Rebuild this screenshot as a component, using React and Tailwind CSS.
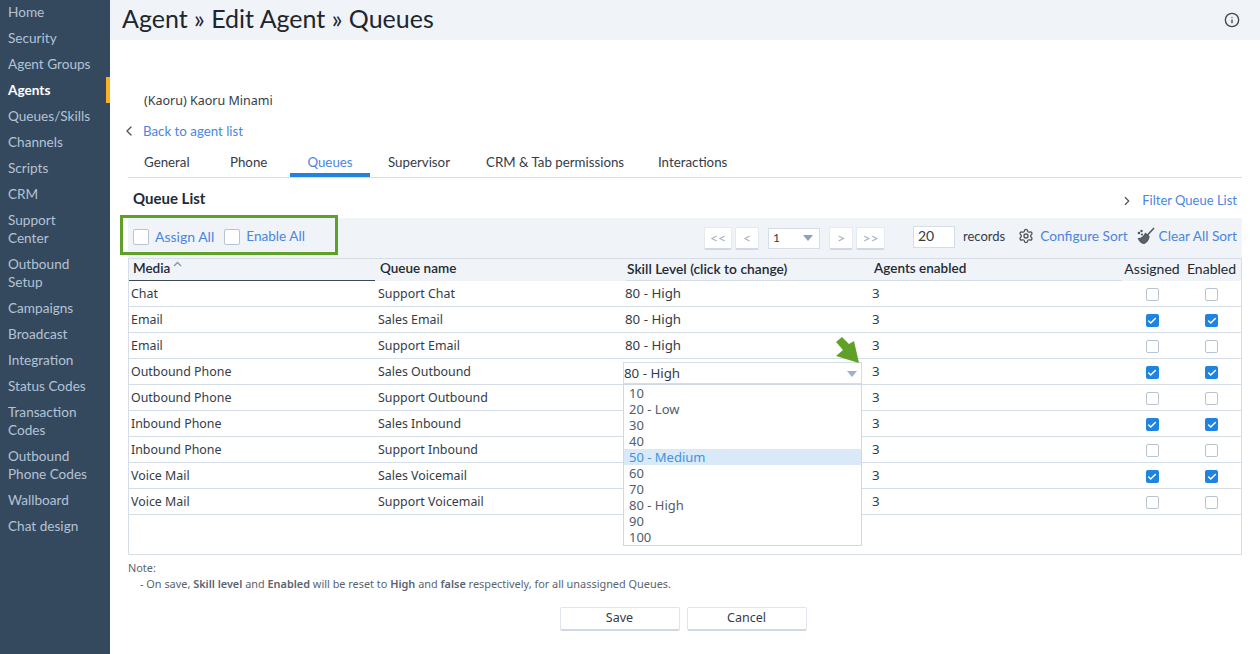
import React from "react";
import { ChevronLeft, ChevronRight, Info, Settings, Check } from "lucide-react";

const nav = ["Home","Security","Agent Groups","Agents","Queues/Skills","Channels","Scripts","CRM","Support Center","Outbound Setup","Campaigns","Broadcast","Integration","Status Codes","Transaction Codes","Outbound Phone Codes","Wallboard","Chat design"];
const rows = [
  ["Chat","Support Chat",0],["Email","Sales Email",1],["Email","Support Email",0],["Outbound Phone","Sales Outbound",1],
  ["Outbound Phone","Support Outbound",0],["Inbound Phone","Sales Inbound",1],["Inbound Phone","Support Inbound",0],["Voice Mail","Sales Voicemail",1],["Voice Mail","Support Voicemail",0],
];
const options = ["10","20 - Low","30","40","50 - Medium","60","70","80 - High","90","100"];

function Box({ checked }) {
  return checked ? (
    <span className="w-[13px] h-[13px] rounded-[2px] bg-[#1f84e0] flex items-center justify-center"><Check size={10} strokeWidth={3.5} color="white" /></span>
  ) : (
    <span className="w-[13px] h-[13px] rounded-[2px] border border-[#b9c4d2] bg-white" />
  );
}
function PageBtn({ children, w }) {
  return <span className={`h-[23px] ${w} flex items-center justify-center bg-white border border-[#e4e9f0] border-b-2 border-b-[#cfd8e4] rounded-[2px] text-[14px] text-[#a3aebb]`}>{children}</span>;
}
function Broom() {
  return (
    <svg width="18" height="18" viewBox="0 0 18 18" fill="none" stroke="#4d5560" strokeWidth="1.2">
      <path d="M17 1 L10.5 8" strokeWidth="1.5" />
      <path d="M8.5 6.5 L12 9.5 C11.5 13 9.5 15.5 7 16.5 C5 16 2.5 14 1.5 11.5 C4 11.5 7 9.5 8.5 6.5 Z" fill="#59626d" />
      <circle cx="2" cy="6" r=".7" /><circle cx="4.5" cy="4" r=".6" /><circle cx="5" cy="7.5" r=".5" />
    </svg>
  );
}

export default function App() {
  return (
    <div className="flex w-[1260px] h-[654px] overflow-hidden bg-white text-[#333c48] font-['Noto_Sans',sans-serif]">
      <aside className="w-[110px] shrink-0 bg-[#35495e] text-[13.6px] leading-[18px] font-['Lato',sans-serif] -mt-px">
        {nav.map((n) => (
          <div key={n} className={`pl-2 py-1 ${n === "Agents" ? "pr-1 text-white font-bold border-r-4 border-[#fbb124]" : "pr-[14px] text-[#b3c3d6]"}`}>{n}</div>
        ))}
      </aside>
      <main className="flex-1 min-w-0 flex flex-col">
        <header className="h-10 shrink-0 bg-[#f0f3f8] flex items-center justify-between pl-3 pr-5">
          <h1 className="text-[25px] leading-8 font-normal text-[#20262e] font-['Lato',sans-serif] -mt-[4px]">Agent » Edit Agent » Queues</h1>
          <Info size={16} color="#444" />
        </header>
        <div className="relative flex-1 pl-[18px] pr-[18px]">
          <div className="mt-[52px] ml-4 text-[12.5px] leading-[17px]">(Kaoru) Kaoru Minami</div>
          <div className="mt-[13px] flex items-center text-[13.3px] leading-[18px] font-['Lato',sans-serif]">
            <ChevronLeft size={16} color="#555" className="-ml-[7px]" />
            <span className="ml-[6px] text-[#4a86e0]">Back to agent list</span>
          </div>
          <nav className="mt-[10px] h-[28px] flex border-b border-[#d5dde7] text-[13.3px] font-['Lato',sans-serif] w-[1114px]">
            <span className="w-[80px] pl-4 pt-[3px]">General</span>
            <span className="w-[82px] pl-[22px] pt-[3px]">Phone</span>
            <span className="w-[80px] h-[27px] text-center pt-[3px] text-[#4a86e0] border-b-[4px] border-[#1f84e0]">Queues</span>
            <span className="ml-[18px] w-[98px] pt-[3px]">Supervisor</span>
            <span className="w-[172px] pt-[3px]">CRM &amp; Tab permissions</span>
            <span className="pt-[3px]">Interactions</span>
          </nav>
          <div className="w-[1114px] h-[40px] flex items-center justify-between pl-[5px]">
            <span className="text-[15px] font-bold text-[#222a33] font-['Lato',sans-serif]">Queue List</span>
            <span className="flex items-center gap-2 text-[13px] text-[#4a86e0] pr-[5px] pt-[6px] font-['Lato',sans-serif]"><ChevronRight size={14} color="#555" />Filter Queue List</span>
          </div>
          <div className="w-[1114px] h-[40px] bg-[#f0f3f8] flex items-center text-[13.7px] font-['Lato',sans-serif] pr-[5px]">
            <div className="w-[576px] flex items-center pl-[5px] -mt-[2px]">
              <span className="w-4 h-4 bg-white border border-[#b9c4d2] rounded-[2px]" />
              <span className="ml-[6px] -mt-[2px] text-[14px] text-[#4a86e0]">Assign All</span>
              <span className="ml-[10px] w-4 h-4 bg-white border border-[#b9c4d2] rounded-[2px]" />
              <span className="ml-[6px] -mt-[2px] text-[13.6px] text-[#4a86e0]">Enable All</span>
            </div>
            <span className="flex items-center gap-[3px]">
              <PageBtn w="w-[28px]">&lt;&lt;</PageBtn><PageBtn w="w-[24px]">&lt;</PageBtn>
            </span>
            <span className="ml-[9px] w-[52px] h-[21px] bg-white border border-[#d5dde7] flex items-center justify-between px-1 text-[12px]">1<span className="w-0 h-0 border-x-[5px] border-x-transparent border-t-[6px] border-t-[#8fa0b8] mr-[2px]" /></span>
            <span className="ml-[9px] flex items-center gap-[3px]">
              <PageBtn w="w-[24px]">&gt;</PageBtn><PageBtn w="w-[29px]">&gt;&gt;</PageBtn>
            </span>
            <span className="ml-[28px] w-[42px] h-[22px] bg-white border border-[#d5dde7] pl-1 text-[14px] leading-[18px] -mt-[2px]">20</span>
            <span className="ml-[8px] -mt-[2px] text-[13px]">records</span>
            <span className="ml-auto flex items-center -mt-[4px]">
              <Settings size={16} color="#555" />
              <span className="ml-[6px] text-[#4a86e0]">Configure Sort</span>
              <span className="ml-[9px]"><Broom /></span>
              <span className="ml-[4px] text-[#4a86e0]">Clear All Sort</span>
            </span>
          </div>
          <div className="w-[1114px] h-[297px] border border-[#d5dde7] text-[12.4px]">
            <div className="h-[22px] bg-[#f0f3f8] grid grid-cols-[250px_247px_247px_249px_60px_1fr] font-semibold text-[13.5px] leading-[19px] font-['Lato',sans-serif] text-[#222a33]">
              <span className="pl-1 border-b border-[#3c4855] mr-[4px] flex items-start gap-[3px]">
                Media
                <svg className="mt-[2px]" width="9" height="6" viewBox="0 0 9 6" fill="none" stroke="#8a94a0" strokeWidth="1.3"><path d="M1 5 L4.5 1.5 L8 5" /></svg>
              </span>
              <span className="pl-[1px]">Queue name</span>
              <span className="pl-[1px] border-b border-[#d5dde7] text-[13.8px]">Skill Level (click to change)</span>
              <span className="pl-[1px] border-b border-[#d5dde7]">Agents enabled</span>
              <span className="text-center font-normal text-[14px] whitespace-nowrap">Assigned</span>
              <span className="text-center font-normal text-[14px] whitespace-nowrap">Enabled</span>
            </div>
            {rows.map((r, i) => (
              <div key={i} className="h-[26px] border-b border-[#d5dde7] grid grid-cols-[249px_247px_247px_250px_60px_1fr] items-center pt-[2px]">
                <span className="pl-[2px]">{r[0]}</span>
                <span>{r[1]}</span>
                <span className="text-[13.3px] -mt-[2px]">{i < 3 ? "80 - High" : ""}</span>
                <span className="text-[13.3px] -mt-[2px]">3</span>
                <span className="flex justify-center"><Box checked={r[2]} /></span>
                <span className="flex justify-center"><Box checked={r[2]} /></span>
              </div>
            ))}
          </div>
          <div className="mt-[5px] text-[10.9px] leading-4 text-[#5a6470]">
            <div>Note:</div>
            <div className="pl-[12px]">- On save, <b className="font-semibold">Skill level</b> and <b className="font-semibold">Enabled</b> will be reset to <b className="font-semibold">High</b> and <b className="font-semibold">false</b> respectively, for all unassigned Queues.</div>
          </div>
          <div className="mt-[15px] flex justify-center gap-[7px] text-[12.5px] w-[1114px] pr-[4px]">
            <span className="w-[120px] h-[24px] flex items-center justify-center bg-white border border-[#e0e6ee] border-b-2 border-b-[#cfd8e4] rounded-[2px]">Save</span>
            <span className="w-[120px] h-[24px] flex items-center justify-center bg-white border border-[#e0e6ee] border-b-2 border-b-[#cfd8e4] rounded-[2px]">Cancel</span>
          </div>

          {/* Green highlight around Assign/Enable */}
          <div className="absolute left-[10px] top-[175px] w-[218px] h-[40px] border-[3px] border-[#5fa128] pointer-events-none" />

          {/* Open select */}
          <div className="absolute left-[513px] top-[322px] w-[239px] h-[23px] bg-white border border-[#d5dde7] border-b-2 flex items-center justify-between pl-0 pr-[4px] pt-[2px] text-[13.3px]">
            80 - High
            <span className="w-0 h-0 border-x-[5px] border-x-transparent border-t-[6px] border-t-[#9db0cc]" />
          </div>
          <div className="absolute left-[513px] top-[344px] w-[239px] h-[162px] bg-white border border-[#cfd8e4] text-[13px] leading-4 text-[#555d68]">
            {options.map((o) => (
              <div key={o} className={`pl-[5px] ${o === "50 - Medium" ? "bg-[#d9e9f8] text-[#3f94e4]" : ""}`}>{o}</div>
            ))}
          </div>

          {/* Green arrow annotation */}
          <svg className="absolute left-[726px] top-[297px]" width="24" height="27" viewBox="0 0 24 27">
            <path d="M0 5 L6 0 L13 7 L18 4 L23 26 L0 19 L7 13 Z" fill="#5fa128" />
          </svg>
        </div>
      </main>
    </div>
  );
}
